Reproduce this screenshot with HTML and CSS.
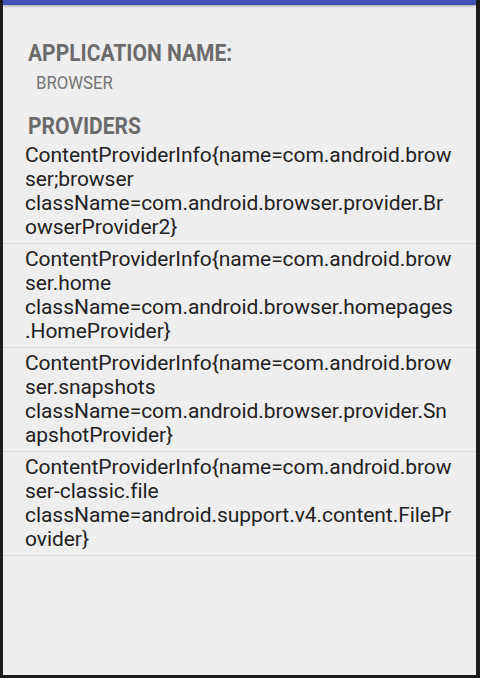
FILE: index.html
```html
<!DOCTYPE html>
<html>
<head>
<meta charset="utf-8">
<link rel="stylesheet" href="styles.css">
</head>
<body>
<div class="frame">
  <div class="appbar"></div>
  <div class="content">
    <h2 class="label"><span class="cond">APPLICATION NAME:</span></h2>
    <div class="app-name"><span class="cond-r">BROWSER</span></div>
    <h2 class="label providers"><span class="cond">PROVIDERS</span></h2>
    <ul class="list">
      <li class="item">ContentProviderInfo{name=com.android.brow<br>ser;browser<br>className=com.android.browser.provider.Br<br>owserProvider2}</li>
      <li class="item">ContentProviderInfo{name=com.android.brow<br>ser.home<br>className=com.android.browser.homepages<br>.HomeProvider}</li>
      <li class="item">ContentProviderInfo{name=com.android.brow<br>ser.snapshots<br>className=com.android.browser.provider.Sn<br>apshotProvider}</li>
      <li class="item">ContentProviderInfo{name=com.android.brow<br>ser-classic.file<br>className=android.support.v4.content.FilePr<br>ovider}</li>
    </ul>
  </div>
</div>
</body>
</html>
```
FILE: styles.css
```css
html, body {
  margin: 0;
  padding: 0;
  background: #1b1b1b;
}
.frame {
  box-sizing: border-box;
  width: 480px;
  height: 678px;
  border-left: 3px solid #1b1b1b;
  border-right: 4px solid #1b1b1b;
  border-bottom: 3px solid #1b1b1b;
  background: #eeeeee;
  font-family: Roboto, "Liberation Sans", sans-serif;
  overflow: hidden;
}
.appbar {
  height: 5px;
  background: #3f51b5;
  box-shadow: 0 1px 3px rgba(0,0,0,0.35);
}
.content {
  padding-top: 34px;
}
.label {
  margin: 0;
  padding-left: 25px;
  font-size: 24px;
  font-weight: 700;
  color: #6b6b6b;
  line-height: 28px;
  white-space: nowrap;
}
.cond {
  display: inline-block;
  transform: scaleX(0.875);
  transform-origin: left center;
}
.app-name {
  margin: 5px 0 0 0;
  padding-left: 33px;
  font-size: 19px;
  color: #757575;
  line-height: 22px;
  white-space: nowrap;
}
.cond-r {
  display: inline-block;
  transform: scaleX(0.88);
  transform-origin: left center;
}
.providers {
  margin-top: 18px;
}
.list {
  list-style: none;
  margin: 0;
  padding: 0;
}
.item {
  padding: 3px 10px 4px 22px;
  font-size: 21px;
  line-height: 24px;
  letter-spacing: -0.05px;
  color: #222222;
  white-space: nowrap;
  border-bottom: 1px solid #dadada;
}
```
